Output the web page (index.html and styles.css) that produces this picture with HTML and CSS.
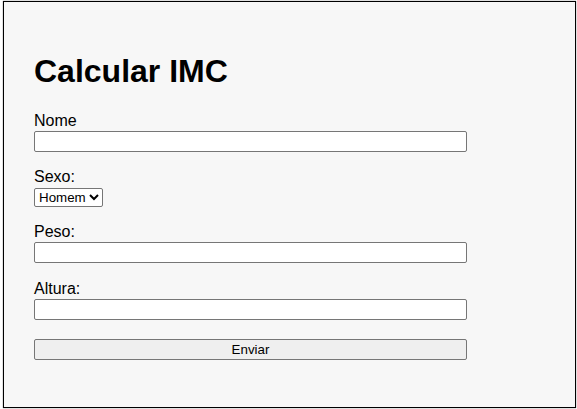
FILE: index.html
```html
<!DOCTYPE html>
<html lang="pt">
<head>
<meta charset="utf-8">
<title>Calcular IMC</title>
<link rel="stylesheet" href="styles.css">
</head>
<body>
<div class="page">
  <div class="card">
    <h1 class="title">Calcular IMC</h1>
    <form class="form">
      <div class="field">
        <label class="label" for="nome">Nome</label>
        <input class="input" type="text" id="nome">
      </div>
      <div class="field">
        <label class="label" for="sexo">Sexo:</label>
        <select class="select" id="sexo">
          <option>Homem</option>
          <option>Mulher</option>
        </select>
      </div>
      <div class="field">
        <label class="label" for="peso">Peso:</label>
        <input class="input" type="text" id="peso">
      </div>
      <div class="field">
        <label class="label" for="altura">Altura:</label>
        <input class="input" type="text" id="altura">
      </div>
      <div class="actions">
        <button class="button" type="submit">Enviar</button>
      </div>
    </form>
  </div>
</div>
</body>
</html>
```

FILE: styles.css
```css
* {
  box-sizing: border-box;
}

html, body {
  margin: 0;
  padding: 0;
  background: #ffffff;
}

body {
  font-family: "Liberation Sans", Arial, sans-serif;
  font-size: 16px;
  color: #000;
}

.page {
  padding: 1px 1px 1px 3px;
  height: 409px;
}

.card {
  height: 100%;
  background: #f7f7f7;
  border: 1px solid #000;
  box-shadow: 0 0 1px rgba(0, 0, 0, 0.7);
  padding: 30px;
}

.title {
  font-size: 32px;
  font-weight: bold;
  margin: 21.44px 0 21.3px 0;
  line-height: normal;
}

.form {
  margin: 0;
}

.field {
  margin-bottom: 16.5px;
}

.label {
  display: block;
  line-height: normal;
}

.input {
  display: block;
  width: 433px;
  height: 21px;
  margin: 1px 0 0 0;
  padding: 1px 2px;
  border: 1px solid #767676;
  border-radius: 2px;
  background: #fff;
  font-family: "Liberation Sans", Arial, sans-serif;
  font-size: 13.33px;
}

.select {
  display: block;
  margin: 1.5px 0 0 0;
  height: 19px;
  font-family: "Liberation Sans", Arial, sans-serif;
  font-size: 13.33px;
  color: #000;
  background: #fff;
  border: 1px solid #767676;
  border-radius: 2px;
}

.actions {
  padding-top: 3.2px;
}

.button {
  display: block;
  width: 433px;
  height: 21px;
  margin: 0;
  padding: 1px 6px;
  background: #efefef;
  border: 1px solid #767676;
  border-radius: 2px;
  font-family: "Liberation Sans", Arial, sans-serif;
  font-size: 13.33px;
  color: #000;
}
```
